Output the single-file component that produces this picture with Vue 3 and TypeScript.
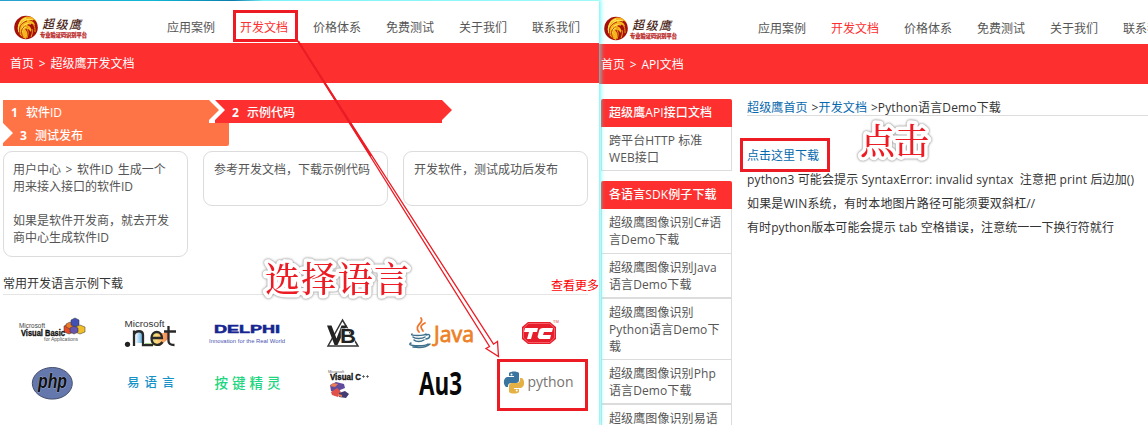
<script setup lang="ts">
const nav: string[] = ['应用案例', '开发文档', '价格体系', '免费测试', '关于我们', '联系我们']
const sdkLinks: string[][] = [
  ['超级鹰图像识别C#语', '言Demo下载'],
  ['超级鹰图像识别Java', '语言Demo下载'],
  ['超级鹰图像识别', 'Python语言Demo下', '载'],
  ['超级鹰图像识别Php', '语言Demo下载'],
  ['超级鹰图像识别易语', '言Demo下载'],
]
</script>

<template>
  <div class="screen">
    <svg width="0" height="0" class="defs">
      <defs>
        <symbol id="brand" viewBox="0 0 76 28">
          <circle cx="12" cy="13.5" r="11.8" fill="#a51009" />
          <path d="M5 9C8 1 18 0 23 8c-3-3-6-3-8-2 4 1 6 3 6 6-3-3-6-3-8-1 3 1 5 3 4 7-2-3-4-4-6-3 3 3 3 6 1 10C5 22 2 16 5 9Z" fill="#f6b51c" />
          <path d="M7 11c2-5 7-7 12-5M8 15c1-4 4-6 9-5M8 19c0-4 1-6 5-6M5 18c-2-6 1-12 7-14" fill="none" stroke="#ffe75a" stroke-width="1.1" />
          <path d="M6 20c-2-7 1-11 7-13M9 23c-3-5-1-10 3-11" fill="none" stroke="#b62509" stroke-width=".9" />
          <path d="m9 12 5 1-3 2M13 24c1-3 2-6 0-9M17 23c1-3 2-5 1-8M21 18c0-4 0-5-2-8" fill="none" stroke="#e99b19" stroke-width="1" />
          <g class="brush" fill="#4a2517">
            <text x="28" y="14.5" transform="rotate(-3 32 10)">超</text>
            <text x="41.5" y="14.5">级</text>
            <text x="55" y="14.5">鹰</text>
          </g>
          <text class="motto" x="26" y="23.2" textLength="47" lengthAdjust="spacingAndGlyphs">专业验证码识别平台</text>
        </symbol>
      </defs>
    </svg>

    <section class="pane docs">
      <div class="strip"></div>
      <header class="top">
        <svg class="brand" width="76" height="28"><use href="#brand" /></svg>
        <nav><a v-for="(n, i) in nav" :key="n" :class="{ active: i === 1 }">{{ n }}</a></nav>
      </header>
      <div class="crumb">首页 &gt; 超级鹰开发文档</div>
      <div class="steps">
        <div class="step one"><b>1</b>软件ID</div>
        <div class="step two"><b>2</b>示例代码</div>
        <div class="step three"><b>3</b>测试发布</div>
      </div>
      <div class="cards">
        <div class="card tall">用户中心 &gt; 软件ID 生成一个<br />用来接入接口的软件ID<br /><br />如果是软件开发商，就去开发<br />商中心生成软件ID</div>
        <div class="card">参考开发文档，下载示例代码</div>
        <div class="card">开发软件，测试成功后发布</div>
      </div>
      <div class="samples"><span>常用开发语言示例下载</span><a>查看更多</a></div>
      <div class="logos">
        <svg viewBox="0 0 97.5 50">
          <g stroke="#333" stroke-width=".5">
            <path d="m61 18 5-2 5 2v6l-5 2-5-2Z" fill="#e84b27" /><path d="m72 19 5-2 5 2v5l-5 2-5-2Z" fill="#f1bd29" />
            <path d="m63 16 4-2 4 2v3l-4 2-4-2Z" fill="#ec7b28" /><path d="m68 12 4-2 4 2v5l-4 2-4-2Z" fill="#4050b5" /><path d="m67 20 4-2 4 2v4l-4 2-4-2Z" fill="#6756ac" />
          </g>
          <text class="arial" x="16" y="20" font-size="7" textLength="26" lengthAdjust="spacingAndGlyphs" fill="#444">Microsoft</text>
          <text class="arial heavy" x="18" y="28.3" font-size="9.5" textLength="44" lengthAdjust="spacingAndGlyphs" fill="#111" stroke="#111" stroke-width=".35">Visual Basic</text>
          <text class="arial" x="41" y="33" font-size="5" textLength="34" lengthAdjust="spacingAndGlyphs" fill="#555">for Applications</text>
        </svg>
        <svg viewBox="0 0 97.5 50">
          <defs>
            <linearGradient id="nb"><stop stop-color="#fff" /><stop offset="1" stop-color="#52a7df" /></linearGradient>
            <linearGradient id="ne"><stop stop-color="#6bc36b" /><stop offset=".5" stop-color="#ffd05a" /><stop offset="1" stop-color="#f0642c" /></linearGradient>
          </defs>
          <path d="M34 24h8v11h-8Z" fill="url(#nb)" /><path d="M44 35h6l1-10h12l4-2v8l-8 7H44Z" fill="url(#ne)" opacity=".8" />
          <text class="arial" x="23.5" y="19" font-size="8.5" textLength="40" lengthAdjust="spacingAndGlyphs" fill="#333">Microsoft</text>
          <g fill="none" stroke="#292929" stroke-width="2.3"><path d="M33 38V22.5M33 27c1-5 9-5 9 0v10.2h10M50.5 30H61c0-8-10.5-8-10.5 0s8 8.500 11 4M67.500 18v15c0 3 2 4 6 4M63 23.500h12" /></g><circle cx="26.5" cy="36.300" r="2.6" fill="#222" />
        </svg>
        <svg viewBox="0 0 97.5 50">
          <text class="arial heavy" x="16" y="25.2" font-size="10.5" textLength="66" lengthAdjust="spacingAndGlyphs" fill="#172491" stroke="#172491" stroke-width=".5">DELPHI</text>
          <text class="arial" x="11" y="35" font-size="6" textLength="76" lengthAdjust="spacingAndGlyphs" fill="#4b53af">Innovation for the Real World</text>
        </svg>
        <svg viewBox="0 0 97.5 50">
          <path d="M46.500 12 32 38h30Z" fill="none" stroke="#333" stroke-width="1.500" />
          <path d="M31 17.500h4.500l5 13 5-13H51L41.500 37h-3Z" fill="#222" />
          <text class="arial heavy" x="44" y="34.500" font-size="21" textLength="16" lengthAdjust="spacingAndGlyphs" fill="#222" stroke="#fff" stroke-width="1" paint-order="stroke">B</text>
        </svg>
        <svg viewBox="0 0 97.5 50">
          <g fill="none" stroke-linecap="round"><path d="M28 10c4 5-8 7-2 14M32 15c-6 3-4 5-2 8" stroke="#ee742b" stroke-width="1.8" /><path d="M19 26c-3 2 12 2 14 0M20 29c2 2 9 2 12 0M21 32c2 2 7 2 10 0M18 35c-6 3 13 4 17 1M20 39c7 1 14 0 17-3M33 27c5-2 5 3 0 4" stroke="#3f718d" stroke-width="1.5" /></g>
          <text class="sans" x="41" y="34" font-size="21.500" textLength="40" lengthAdjust="spacingAndGlyphs" fill="#ed8126" stroke="#ed8126" stroke-width=".8">Java</text>
        </svg>
        <svg viewBox="0 0 97.5 50">
          <path d="M37 14h22l6 5v12l-6 5H37l-6-5V19Z" fill="#e61d2b" /><path d="M37.5 15.500h21l5 4.500v10l-5 4.500h-21l-5-4.500v-10Z" fill="none" stroke="#ff8a91" stroke-width=".6" />
          <path d="M34 20h13l-1 4h-4l-2 7h-4l2-7h-5ZM48 23c0-2 2-3 4-3h10l-1 4h-8l-1 3h8l-1 4H50c-3 0-4-2-3-4Z" fill="#fff" />
          <text class="arial" x="62" y="14.500" font-size="4" fill="#d44">TM</text>
        </svg>
        <svg viewBox="0 0 97.5 50">
          <ellipse cx="49.3" cy="25.3" rx="20" ry="15.8" fill="#6578ad" stroke="#46506d" stroke-width="1" />
          <text class="arial php" x="35" y="29.500" font-size="20" textLength="29" lengthAdjust="spacingAndGlyphs" fill="#111" stroke="#bac4df" stroke-width=".7" paint-order="stroke">php</text>
        </svg>
        <svg viewBox="0 0 97.5 50"><text class="cjk" x="26" y="28.5" font-size="12.5" letter-spacing="5" fill="#1792c9">易语言</text></svg>
        <svg viewBox="0 0 97.5 50"><text class="cjk" x="16.5" y="29.5" font-size="13.5" letter-spacing="4" fill="#20d580">按键精灵</text></svg>
        <svg viewBox="0 0 97.5 50">
          <text class="arial" x="32" y="14.5" font-size="4" fill="#666">Microsoft</text>
          <text class="arial heavy" x="34" y="21.5" font-size="8.3" textLength="31" lengthAdjust="spacingAndGlyphs" fill="#111" stroke="#111" stroke-width=".35">Visual C</text>
          <path d="M66 18.500h3M67.500 17v3M70 18.500h3M71.500 17v3" stroke="#444" stroke-width=".7" />
          <path d="m34 27 6-3 8 2 1 4-5 2-1 3-8-2Z" fill="#604b9d" /><path d="m35 34 6-4 4 4-3 5-6-2Z" fill="#df5149" /><path d="m43 35 6-2 4 3-3 4-7-1Z" fill="#423c72" /><path d="m37 25 5 1-3 3-5-1ZM42 36l4 1v2l-4-1Z" fill="#e97b55" />
        </svg>
        <svg viewBox="0 0 97.5 50"><text class="sans heavy" x="26" y="37" font-size="32" textLength="43" lengthAdjust="spacingAndGlyphs" fill="#080808">Au3</text></svg>
        <svg viewBox="0 0 97.5 50">
          <path d="M18 15c2-2 8-2 10 0v7c0 2-1 3-3 3h-5c-2 0-3 1-3 4h-2c-3-2-3-9 1-10h7v-1h-5Z" fill="#39759e" />
          <path d="M28 34c-2 2-8 2-10 0v-6c0-2 1-3 3-3h5c2 0 3-1 3-5h2c3 2 3 9-1 10h-7v1h5Z" fill="#e5b044" /><circle cx="20.5" cy="16.5" r="1" fill="#fff" /><circle cx="25.7" cy="32.5" r="1" fill="#fff" />
          <text class="sans" x="36.5" y="28.5" font-size="15" textLength="46" lengthAdjust="spacingAndGlyphs" fill="#77736f">python</text>
        </svg>
      </div>
    </section>

    <section class="pane demo">
      <header class="top">
        <svg class="brand" width="76" height="28"><use href="#brand" /></svg>
        <nav><a v-for="(n, i) in nav" :key="n" :class="{ active: i === 1 }">{{ n }}</a></nav>
      </header>
      <div class="crumb">首页 &gt; API文档</div>
      <div class="body">
        <aside>
          <h3>超级鹰API接口文档</h3>
          <div class="entry api">跨平台HTTP 标准<br />WEB接口</div>
          <h3>各语言SDK例子下载</h3>
          <div v-for="(link, i) in sdkLinks" :key="i" class="entry" :class="{ long: link.length > 2, thick: i % 2 === 1 }">
            <div v-for="line in link" :key="line">{{ line }}</div>
          </div>
        </aside>
        <main>
          <div class="path"><a>超级鹰首页</a> &gt;<a>开发文档</a> &gt;Python语言Demo下载</div>
          <p><a>点击这里下载</a></p>
          <p class="syntax">python3 可能会提示 SyntaxError: invalid syntax&nbsp; 注意把 print 后边加()</p>
          <p class="slash">如果是WIN系统，有时本地图片路径可能须要双斜杠//</p>
          <p class="spaces">有时python版本可能会提示 tab 空格错误，注意统一一下换行符就行</p>
        </main>
      </div>
    </section>

    <!-- tutorial annotations -->
    <div class="mark nav-mark"></div>
    <div class="mark python-mark"></div>
    <div class="mark link-mark"></div>
    <svg class="arrow" width="1148" height="425">
      <path d="M298 41 489.5 346.5 486 348.5 498.5 356.5 497.5 341.5 493.5 344.2Z" fill="#fff" stroke="#ed1c24" stroke-width="1.3" />
      <path d="m298 41 73 115" stroke="#ed1c24" stroke-width="2" />
      <g class="note"><text x="265" y="292" textLength="144">选择语言</text><text x="860" y="154" textLength="69">点击</text></g>
    </svg>
  </div>
</template>

<style>
body { margin: 0; overflow: hidden; }
</style>

<style scoped>
* { box-sizing: border-box; }
.screen { position: relative; display: flex; width: 1148px; height: 425px; overflow: hidden; background: #fff; color: #333; font: 12px/17px "Open Sans", "Noto Sans CJK SC", sans-serif; }
.defs { position: absolute; }
.pane { height: 425px; background: #fff; white-space: nowrap; }
.docs { position: relative; z-index: 1; width: 599px; flex: none; box-shadow: 0 0 5px 1px #42f6fa; }
.demo { width: 549px; flex: none; overflow: hidden; }
.strip { height: 1px; background: linear-gradient(90deg, #2b9fce, #11b9d7 25%, #087cae 39%, #79f3f7 44%, #9ffafa); }
.top { display: flex; height: 42px; padding: 13px 0 0 14px; }
.demo .top { height: 44px; padding: 15px 0 0 5px; }
.brand { flex: none; }
nav { display: flex; gap: 25px; margin-left: 77px; padding-top: 5px; color: #555; }
.demo nav { margin-left: 78px; }
nav .active { color: #fd2e2e; }
.crumb { height: 40px; padding-left: 10px; background: #fd2f2f; color: #fff; line-height: 41px; word-spacing: 1.7px; }
.demo .crumb { padding-left: 2px; line-height: 42px; }
.steps { display: flex; flex-wrap: wrap; width: 460px; height: 46px; margin: 17px 0 0 3px; color: #fff; line-height: 25px; }
.step { height: 23px; padding-left: 8px; background: #ff7446; font-weight: 500; }
.step b { display: inline-block; width: 15px; }
.one { width: 216px; clip-path: polygon(0 0, 206px 0, 216px 10px, 206px 20px, 206px 23px, 0 23px); }
.two { width: 237px; margin-left: -4px; padding-left: 17px; background: #fd2f2f; clip-path: polygon(0 0, 227px 0, 237px 10px, 227px 20px, 227px 23px, 0 23px, 0 20px, 10px 10px); }
.three { width: 226px; padding-left: 17px; border-radius: 0 0 2px; clip-path: polygon(0 0, 100% 0, 100% 100%, 0 100%, 0 20px, 10px 10px); }
.cards { display: flex; align-items: flex-start; gap: 15px; height: 106px; margin: 5px 0 0 3px; }
.card { width: 185px; height: 55px; padding: 9px 0 0 10px; border: 1px solid #dcdcdc; border-radius: 9px; color: #555; }
.tall { height: 106px; padding-left: 9px; word-spacing: 1.5px; }
.samples { display: flex; justify-content: space-between; height: 38px; margin-left: 3px; padding-top: 18px; background: linear-gradient(#e5e5e5, #e5e5e5) 0 37px / 585px 1px no-repeat; }
.samples a { padding-top: 2px; color: red; }
.logos { display: grid; grid-template-columns: repeat(6, 97.5px); grid-auto-rows: 50px; margin: 13px 0 0 3px; }
.logos svg { width: 97.5px; height: 50px; }
.arial { font-family: "Liberation Sans", sans-serif; }
.sans { font-family: "Open Sans", sans-serif; }
.heavy { font-weight: 700; }
.php { font-style: italic; font-weight: 700; }
.cjk { font-family: "Noto Sans CJK SC", sans-serif; font-weight: 500; }
.brush { font: italic 500 12px "Noto Sans CJK SC", sans-serif; }
.motto { font: 700 5.5px "Noto Sans CJK SC", sans-serif; fill: #b92424; stroke: #b92424; stroke-width: .25px; }
.body { display: flex; gap: 15px; padding: 15px 0 0 2px; }
aside { width: 131px; flex: none; }
h3 { height: 28px; margin: 0; padding-left: 8px; border-radius: 2px 2px 0 0; background: #fd2f2f; color: #fff; font-size: 12px; font-weight: 500; line-height: 28px; letter-spacing: .1px; }
.entry { height: 45px; padding: 5px 0 0 7px; border: 1px solid #dcdcdc; border-top: 0; color: #555; letter-spacing: .1px; }
.entry.long { height: 61px; }
.entry.thick { height: 45px; border-bottom-width: 2px; }
.entry.api { height: 44px; margin-bottom: 10px; }
main { flex: 1; min-width: 0; }
.path { height: 17px; margin-bottom: 28px; border-bottom: 1px solid #ddd; letter-spacing: .13px; word-spacing: .6px; }
main a { color: #0769ad; }
p { height: 24px; margin: 0; line-height: 24px; }
.syntax { letter-spacing: .14px; }
.slash { letter-spacing: .16px; }
.spaces { letter-spacing: .08px; }
.mark { position: absolute; z-index: 2; border: 3px solid #ed1c24; }
.nav-mark { left: 233px; top: 10px; width: 65px; height: 32px; }
.python-mark { left: 497px; top: 359px; width: 91px; height: 52px; }
.link-mark { left: 740px; top: 138px; width: 90px; height: 34px; }
.arrow { position: absolute; z-index: 3; left: 0; top: 0; }
.note { font: 500 35px "Noto Serif CJK SC", "Noto Sans CJK SC", serif; fill: #ed1c24; stroke: #fff; stroke-width: 7px; stroke-linejoin: round; paint-order: stroke; filter: drop-shadow(0 0 1px #999) drop-shadow(0 0 1px #ccc); }
</style>
